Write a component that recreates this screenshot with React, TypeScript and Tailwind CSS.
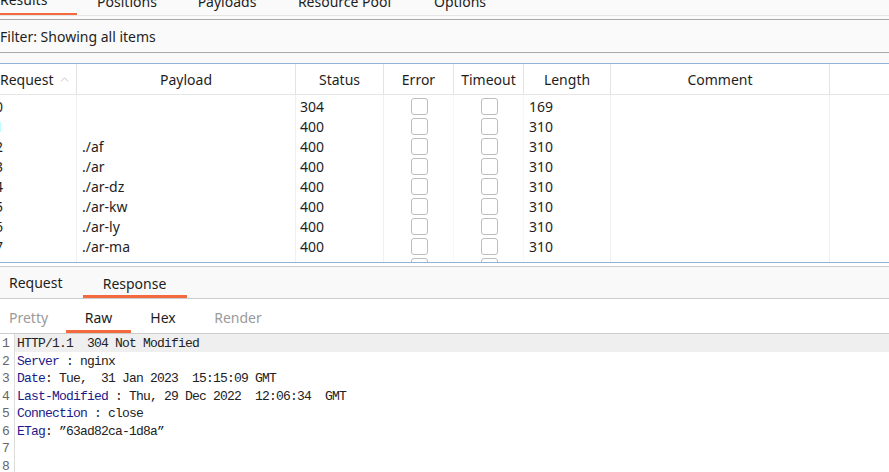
import React from 'react';
import { ChevronUp } from 'lucide-react';

const ui = { fontFamily: '"Noto Sans", "Open Sans", sans-serif' };
const mono = { fontFamily: '"Liberation Mono", "Courier New", monospace' };

const rows = [
    { n: '0', payload: '', status: '304', length: '169' },
    { n: '1', payload: '', status: '400', length: '310', selected: true },
    { n: '2', payload: './af', status: '400', length: '310' },
    { n: '3', payload: './ar', status: '400', length: '310' },
    { n: '4', payload: './ar-dz', status: '400', length: '310' },
    { n: '5', payload: './ar-kw', status: '400', length: '310' },
    { n: '6', payload: './ar-ly', status: '400', length: '310' },
    { n: '7', payload: './ar-ma', status: '400', length: '310' },
    { n: '8', payload: './ar-om', status: '400', length: '310' },
];

const cols = 'grid grid-cols-[77px_219px_88px_70px_70px_87px_219px_59px]';

function Checkbox() {
    return <div className="w-[17px] h-[17px] rounded-[3px] border-[1.5px] border-[#bdbdbd] bg-white" />;
}

// response lines: key in blue, rest plain
const lines: { key?: string; text: string }[] = [
    { text: 'HTTP/1.1  304 Not Modified' },
    { key: 'Server', text: ' : nginx' },
    { key: 'Date', text: ': Tue,  31 Jan 2023  15:15:09 GMT' },
    { key: 'Last-Modified', text: ' : Thu, 29 Dec 2022  12:06:34  GMT' },
    { key: 'Connection', text: ' : close' },
    { key: 'ETag', text: ': \u201d63ad82ca-1d8a\u201d' },
    { text: '' },
    { text: '' },
];

export default function App() {
    return (
        <div className="w-[889px] h-[472px] overflow-hidden bg-white flex flex-col text-[14px] text-[#1e1e1e]" style={ui}>
            {/* Top tabs (scrolled partly off) */}
            <div className="h-[16px] shrink-0 overflow-hidden bg-[#fafafa] border-b border-[#e6e6e6]">
                <div className="-mt-[14px] h-[30px] flex">
                    <div className="w-[77px] h-[30px] flex items-center border-b-[3px] border-[#f26a3d]">Results</div>
                    <div className="w-[100px] h-[30px] flex items-center justify-center">Positions</div>
                    <div className="w-[100px] h-[30px] flex items-center justify-center">Payloads</div>
                    <div className="w-[135px] h-[30px] flex items-center justify-center">Resource Pool</div>
                    <div className="w-[96px] h-[30px] flex items-center justify-center">Options</div>
                </div>
            </div>
            <div className="h-[3px] shrink-0 bg-[#fafafa]" />

            {/* Filter bar */}
            <div className="h-[34px] shrink-0 border-y border-[#a9a9a9] bg-[#fafafa] flex items-center pt-px">
                Filter: Showing all items
            </div>
            <div className="h-[10px] shrink-0 bg-[#f9f9f9]" />

            {/* Results table */}
            <div className="h-[200px] shrink-0 border-y border-[#8fb2d6] overflow-hidden bg-white">
                <div className={`${cols} h-[31px] border-b border-[#e6e6e6]`}>
                    <div className="flex items-center border-r border-[#e3e3e3] pt-px">
                        <span>Request</span>
                        <ChevronUp className="w-[13px] h-[13px] ml-[4px] text-[#b5b5b5]" strokeWidth={1.5} />
                    </div>
                    <div className="flex items-center justify-center border-r border-[#e3e3e3] pt-px">Payload</div>
                    <div className="flex items-center justify-center border-r border-[#e3e3e3] pt-px">Status</div>
                    <div className="flex items-center justify-center border-r border-[#e3e3e3] pt-px">Error</div>
                    <div className="flex items-center justify-center border-r border-[#e3e3e3] pt-px">Timeout</div>
                    <div className="flex items-center justify-center border-r border-[#e3e3e3] pt-px">Length</div>
                    <div className="flex items-center justify-center border-r border-[#e3e3e3] pt-px">Comment</div>
                    <div />
                </div>
                {rows.map((r) => (
                    <div key={r.n} className={`${cols} h-[20px]`}>
                        <div className="flex items-center overflow-hidden border-r border-[#f0f0f0] pt-px">
                            <span className={`-ml-[5px] ${r.selected ? 'text-[#3ff0ff]' : ''}`}>{r.n}</span>
                        </div>
                        <div className="flex items-center pl-[5px] border-r border-[#f0f0f0] pt-px">{r.payload}</div>
                        <div className="flex items-center pl-[4px] border-r border-[#f0f0f0] pt-px">{r.status}</div>
                        <div className="flex items-center justify-center pl-[2px] border-r border-[#f7f7f7]"><Checkbox /></div>
                        <div className="flex items-center justify-center pl-[2px] border-r border-[#f7f7f7]"><Checkbox /></div>
                        <div className="flex items-center pl-[5px] border-r border-[#f0f0f0] pt-px">{r.length}</div>
                        <div className="border-r border-[#f0f0f0]" />
                        <div />
                    </div>
                ))}
            </div>
            <div className="h-[3px] shrink-0 bg-white" />

            {/* Request / Response tabs */}
            <div className="h-[33px] shrink-0 border-y border-[#cccccc] bg-[#f9f9f9] flex">
                <div className="h-full flex items-center pl-[9px] pr-[20px]">Request</div>
                <div className="w-[104px] h-full flex items-center justify-center border-b-[3px] border-[#f26a3d] pt-[4px]">Response</div>
            </div>

            {/* Sub tabs */}
            <div className="h-[35px] shrink-0 border-b border-[#cccccc] bg-white flex">
                <div className="w-[66px] h-full flex items-center pl-[9px] text-[#9a9a9a] pt-[2px]">Pretty</div>
                <div className="w-[65px] h-full flex items-center justify-center border-b-[3px] border-[#f26a3d] pt-[5px]">Raw</div>
                <div className="w-[64px] h-full flex items-center justify-center pt-[2px]">Hex</div>
                <div className="w-[86px] h-full flex items-center justify-center text-[#9a9a9a] pt-[2px]">Render</div>
            </div>

            {/* Raw editor */}
            <div className="flex-1 flex text-[13px] tracking-[-0.8px]" style={mono}>
                <div className="w-[15px] shrink-0 border-r border-[#dcdcdc] text-[#666]">
                    {lines.map((_, i) => (
                        <div key={i} className="h-[17.5px] flex items-center pl-[2px] pt-[2px]">{i + 1}</div>
                    ))}
                </div>
                <div className="flex-1">
                    {lines.map((l, i) => (
                        <div key={i} className={`h-[17.5px] flex items-center pl-[2px] pt-[2px] whitespace-pre ${i === 0 ? 'bg-[#efefef]' : ''}`}>
                            {l.key && <span className="text-[#1a1a8a]">{l.key}</span>}
                            <span className="text-[#222]">{l.text}</span>
                        </div>
                    ))}
                </div>
            </div>
        </div>
    );
}
